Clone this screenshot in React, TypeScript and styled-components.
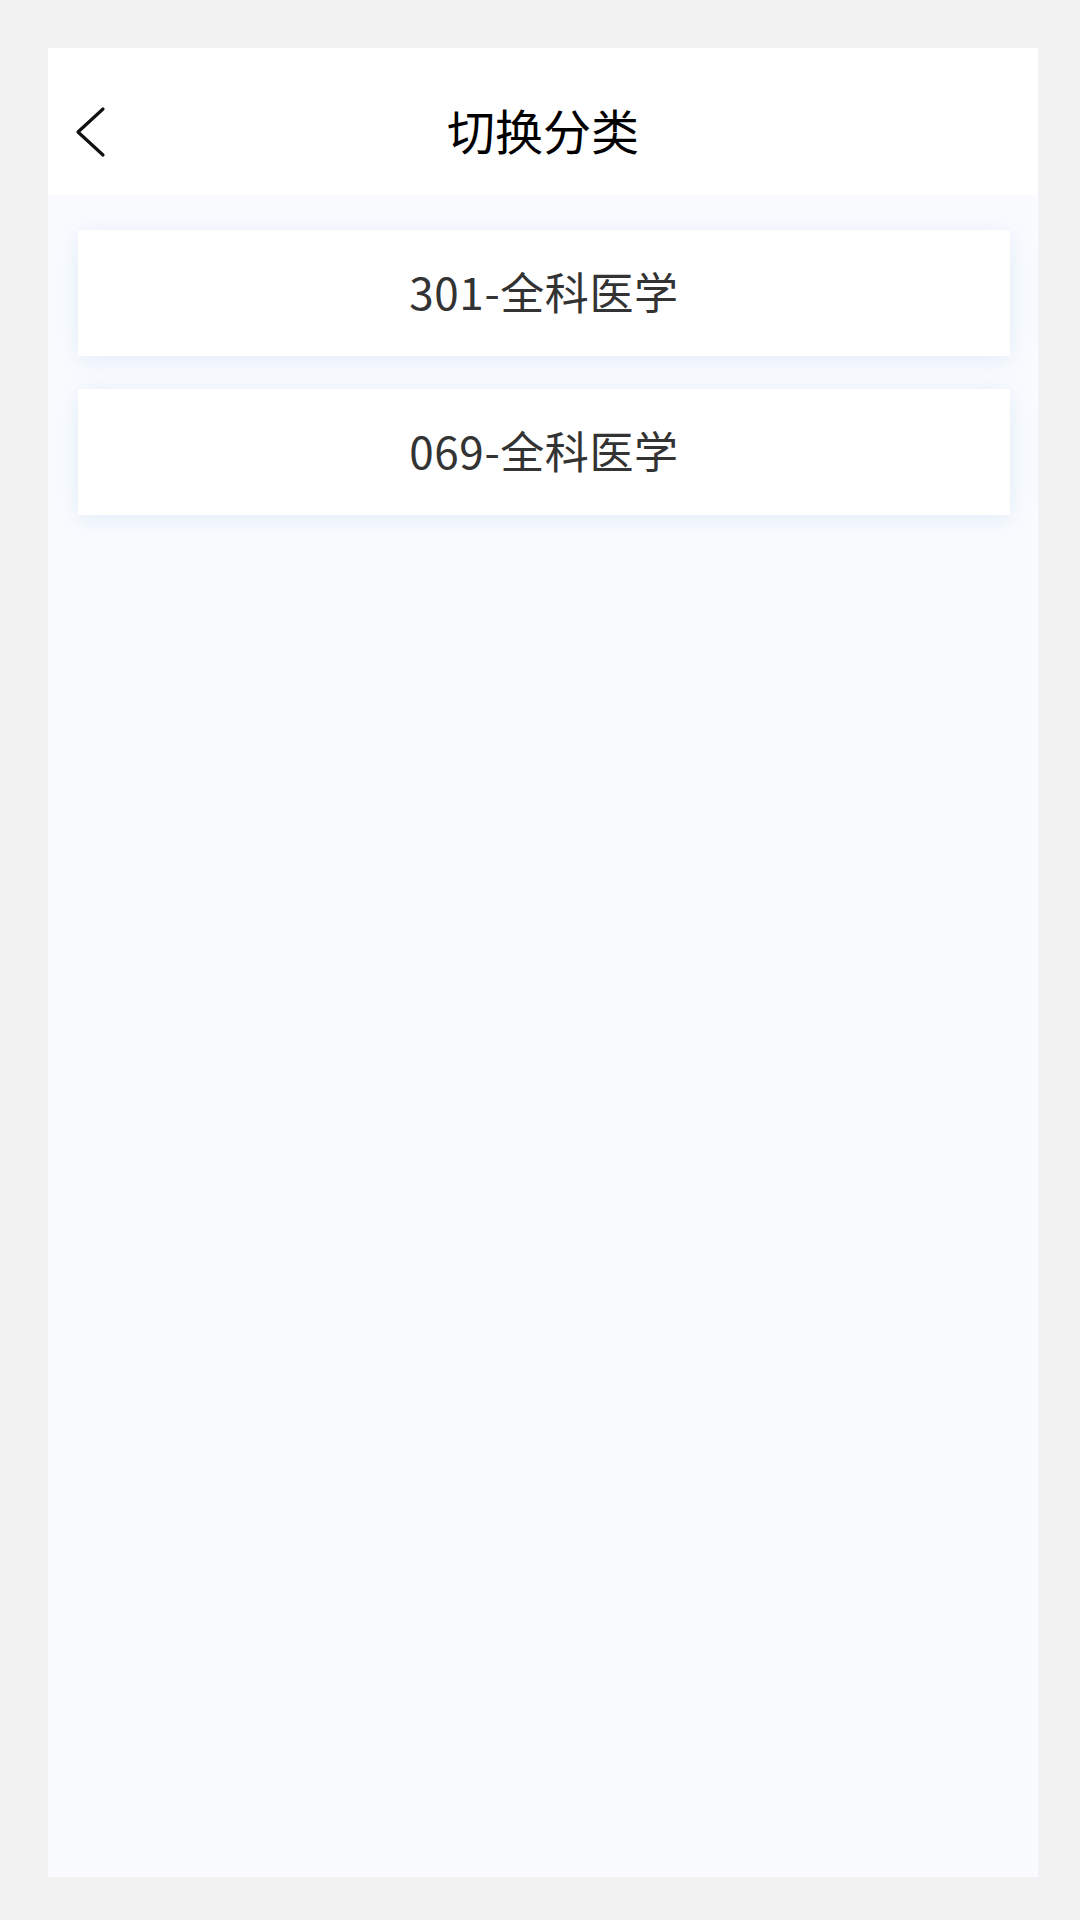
import styled, { createGlobalStyle } from 'styled-components';

const GlobalStyle = createGlobalStyle`
  html, body {
    margin: 0;
    padding: 0;
    background: #f2f2f2;
  }
  body {
    font-family: "Noto Sans CJK SC", "Noto Sans", sans-serif;
  }
`;

const Frame = styled.div`
  width: 990px;
  height: 1829px;
  margin: 48px 0 0 48px;
  display: flex;
  flex-direction: column;
  background: #f9fbfe;
`;

const Header = styled.header`
  height: 147px;
  box-sizing: border-box;
  padding: 20px 27px 0;
  display: grid;
  grid-template-columns: 80px 1fr 80px;
  align-items: center;
  background: #ffffff;
`;

const BackButton = styled.button`
  width: 40px;
  height: 56px;
  padding: 0;
  border: none;
  background: transparent;
  display: flex;
  align-items: center;
  justify-content: flex-start;
  cursor: pointer;
`;

const Title = styled.h1`
  margin: 0;
  padding-bottom: 6px;
  text-align: center;
  font-size: 48px;
  font-weight: 400;
  color: #000000;
  letter-spacing: 0;
`;

const List = styled.div`
  display: flex;
  flex-direction: column;
  gap: 33px;
  padding: 35px 28px 0 30px;
`;

const Card = styled.div`
  height: 126px;
  box-sizing: border-box;
  padding-bottom: 5px;
  display: flex;
  align-items: center;
  justify-content: center;
  background: #ffffff;
  border-radius: 2px;
  box-shadow: 0 4px 24px rgba(180, 208, 242, 0.32);
  font-size: 44px;
  letter-spacing: 0.6px;
  color: #333333;
`;

const categories = ['301-全科医学', '069-全科医学'];

const BackIcon = () => (
  <svg width="32" height="54" viewBox="0 0 32 54" fill="none">
    <polyline
      points="28,4 3,27 28,50"
      stroke="#111111"
      strokeWidth="3.2"
      strokeLinecap="round"
      strokeLinejoin="round"
    />
  </svg>
);

const App = () => {
  return (
    <>
      <GlobalStyle />
      <Frame>
        <Header>
          <BackButton aria-label="返回">
            <BackIcon />
          </BackButton>
          <Title>切换分类</Title>
          <div />
        </Header>
        <List>
          {categories.map((name) => (
            <Card key={name}>{name}</Card>
          ))}
        </List>
      </Frame>
    </>
  );
};

export default App;
